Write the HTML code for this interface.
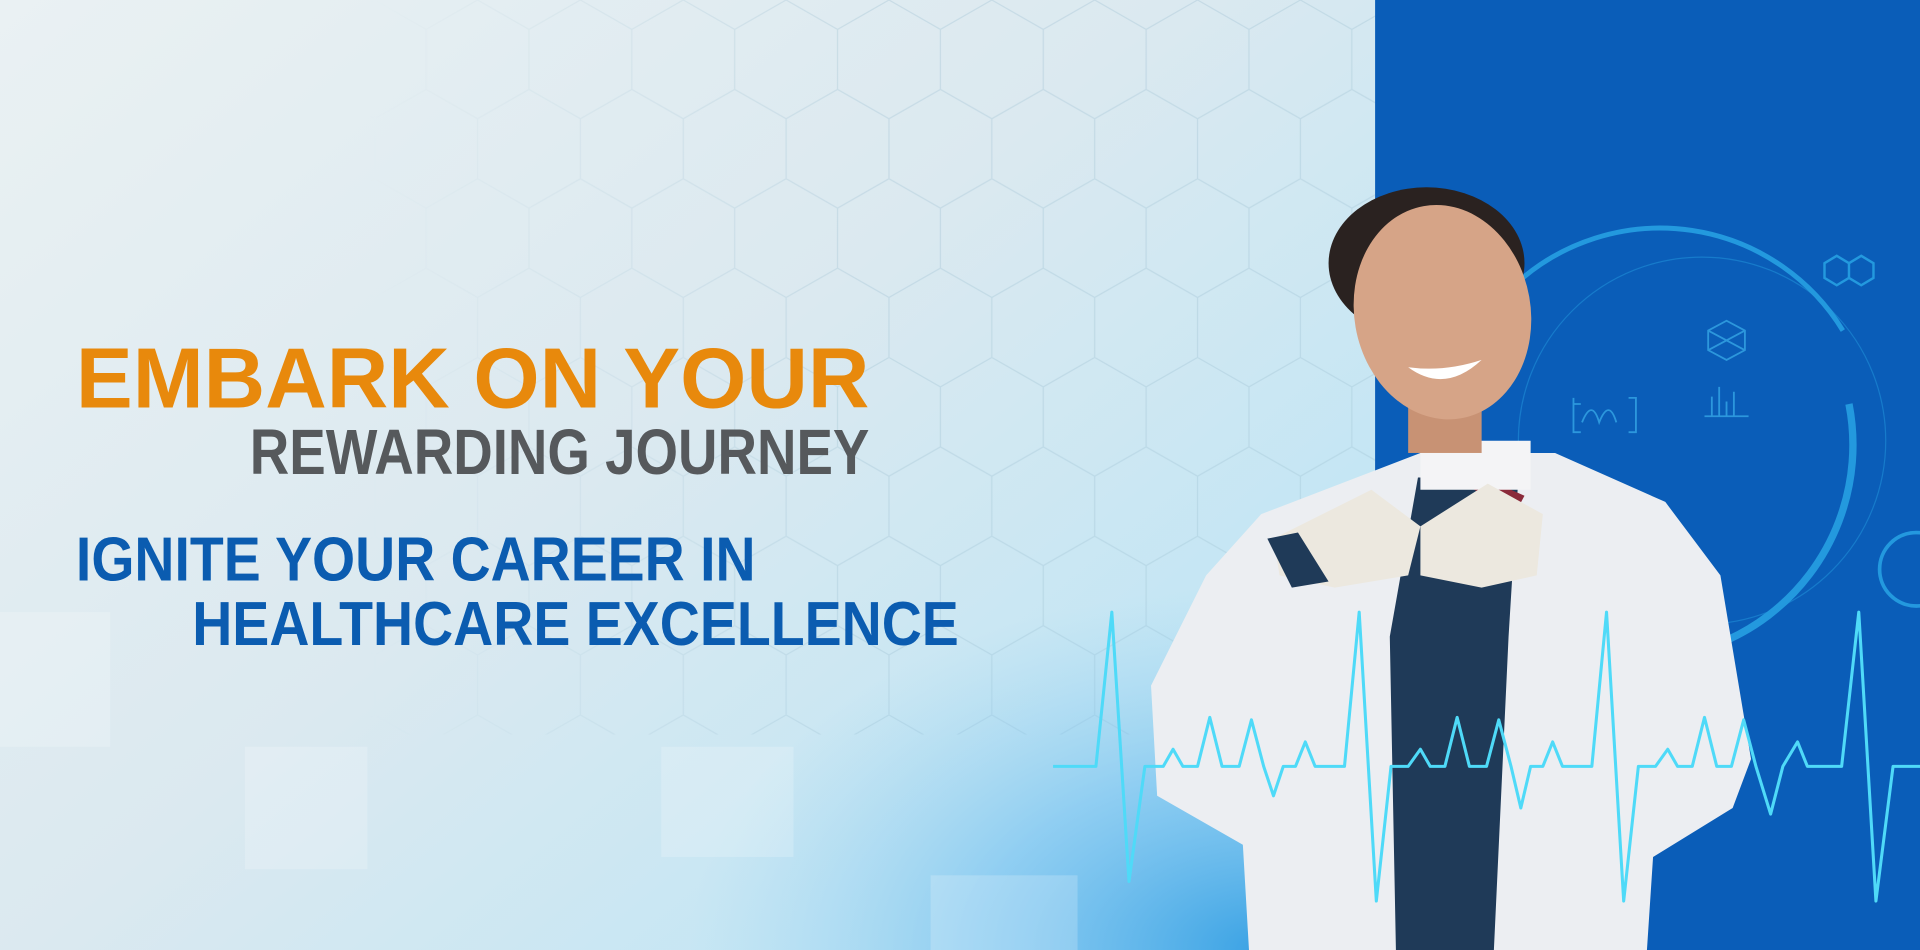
<!DOCTYPE html>
<html><head><meta charset="utf-8"><style>
html,body{margin:0;padding:0;width:1920px;height:950px;overflow:hidden;background:#e6eff2}
svg{display:block}
</style></head><body>
<svg width="1920" height="950" viewBox="0 0 1568 776" preserveAspectRatio="none" xmlns="http://www.w3.org/2000/svg">
<defs>
<linearGradient id="bg" x1="0" y1="0" x2="1" y2="0.6">
<stop offset="0" stop-color="#eaf1f3"/>
<stop offset="0.45" stop-color="#dbe9f0"/>
<stop offset="0.75" stop-color="#c4e6f4"/>
<stop offset="1" stop-color="#b2e2f4"/>
</linearGradient>
<radialGradient id="br" cx="0.85" cy="1" r="0.75">
<stop offset="0" stop-color="#3aa2e4" stop-opacity="1"/>
<stop offset="0.5" stop-color="#6ebef0" stop-opacity="0.6"/>
<stop offset="1" stop-color="#9ad2f0" stop-opacity="0"/>
</radialGradient>
<linearGradient id="hexfade" x1="0" y1="0" x2="1" y2="0">
<stop offset="0" stop-color="#fff" stop-opacity="0"/>
<stop offset="0.5" stop-color="#fff" stop-opacity="1"/>
<stop offset="1" stop-color="#fff" stop-opacity="1"/>
</linearGradient>
<mask id="hm"><rect x="300" y="0" width="823" height="600" fill="url(#hexfade)"/></mask>
<pattern id="hex" width="84" height="146" patternUnits="userSpaceOnUse" x="600" y="0">
<path d="M42 0 L84 24 L84 73 L42 97 L0 73 L0 24 Z M42 97 L42 146" fill="none" stroke="#9cbfd0" stroke-opacity="0.35" stroke-width="1"/>
</pattern>
</defs>
<rect width="1568" height="776" fill="url(#bg)"/>
<rect x="300" y="0" width="823" height="600" fill="url(#hex)" mask="url(#hm)"/>
<rect x="500" y="380" width="623" height="396" fill="url(#br)"/>
<g fill="#ffffff" fill-opacity="0.2">
<rect x="0" y="500" width="90" height="110"/><rect x="200" y="610" width="100" height="100"/>
<rect x="540" y="610" width="108" height="90"/><rect x="760" y="715" width="120" height="61"/>
</g>
<rect x="1123" y="0" width="445" height="776" fill="#0a5db8"/>
<g fill="none" stroke="#2aa8e8" stroke-width="4" opacity="0.8">
<path d="M1240 230 A175 175 0 0 1 1505 270"/>
<path d="M1510 330 A175 175 0 0 1 1260 520" stroke-width="6"/>
<circle cx="1390" cy="360" r="150" stroke-width="1" stroke-opacity="0.5"/>
<circle cx="1565" cy="465" r="30" stroke-width="3"/>
<path d="M1490 215 l10 -6 l10 6 v12 l-10 6 l-10 -6z M1510 215 l10 -6 l10 6 v12 l-10 6 l-10 -6z" stroke-width="2"/>
</g>
<g fill="none" stroke="#3bb0ec" stroke-width="1.5" opacity="0.7">
<path d="M1285 330 h6 M1285 325 v28 h6 M1330 325 h6 v28 h-6 M1292 345 q8 -20 14 0 q8 -20 14 0"/>
<path d="M1395 270 l15 -8 l15 8 v16 l-15 8 l-15 -8 z M1395 270 l30 16 M1425 270 l-30 16"/>
<path d="M1392 340 h36 M1398 340 v-16 M1404 340 v-24 M1410 340 v-12 M1416 340 v-20"/>
</g>
<!-- person -->
<g>
<ellipse cx="1165" cy="215" rx="80" ry="62" fill="#2a2220"/>
<path d="M1030 420 L1160 370 L1270 370 L1360 410 L1405 470 L1430 620 L1415 660 L1350 700 L1345 776 L1020 776 L1015 690 L945 650 L940 560 L985 470 Z" fill="#eceef2"/>
<path d="M1158 390 L1240 390 L1232 520 L1220 776 L1140 776 L1135 520 Z" fill="#1f3a58"/>
<path d="M1200 385 L1245 405 L1238 418 L1200 398 Z" fill="#8a2a3a"/>
<path d="M1160 360 L1250 360 L1250 400 L1160 400 Z" fill="#f4f4f6"/>
<rect x="1150" y="310" width="60" height="60" fill="#c89274"/>
<ellipse cx="1178" cy="255" rx="72" ry="88" fill="#d6a487" transform="rotate(-10 1178 255)"/>
<path d="M1150 300 q30 22 60 -6 q-30 10 -60 6z" fill="#fff"/>
<path d="M1040 440 L1120 400 L1160 430 L1150 470 L1090 480 L1045 470 Z" fill="#ece8df"/>
<path d="M1160 430 L1215 395 L1260 420 L1255 470 L1210 480 L1160 470 Z" fill="#ece8df"/>
<path d="M1035 440 L1055 480 L1085 475 L1060 435 Z" fill="#1f3a58"/>
</g>
<polyline fill="none" stroke="#4fdaf8" stroke-width="2.5" stroke-linejoin="round" points="860,626 895,626 908,500 922,720 935,626 950,626 958,612 966,626 978,626 988,586 998,626 1012,626 1022,588 1032,626 1040,650 1048,626 1058,626 1066,606 1074,626 1098,626 1110,500 1124,736 1136,626 1150,626 1160,612 1168,626 1180,626 1190,586 1200,626 1214,626 1224,588 1234,626 1242,660 1250,626 1260,626 1268,606 1276,626 1300,626 1312,500 1326,736 1338,626 1352,626 1362,612 1370,626 1382,626 1392,586 1402,626 1414,626 1424,588 1434,626 1446,665 1456,626 1468,606 1476,626 1504,626 1518,500 1532,736 1546,626 1568,626"/>
<g font-family="'Liberation Sans', sans-serif" font-weight="bold">
<text x="62" y="333" font-size="70" fill="#e8890c" textLength="648" lengthAdjust="spacingAndGlyphs">EMBARK ON YOUR</text>
<text x="204" y="387" font-size="52" fill="#56595c" textLength="506" lengthAdjust="spacingAndGlyphs">REWARDING JOURNEY</text>
<text x="62" y="474" font-size="51" fill="#0b5cb0" textLength="555" lengthAdjust="spacingAndGlyphs">IGNITE YOUR CAREER IN</text>
<text x="157" y="527" font-size="51" fill="#0b5cb0" textLength="626" lengthAdjust="spacingAndGlyphs">HEALTHCARE EXCELLENCE</text>
</g>
</svg>
</body></html>
